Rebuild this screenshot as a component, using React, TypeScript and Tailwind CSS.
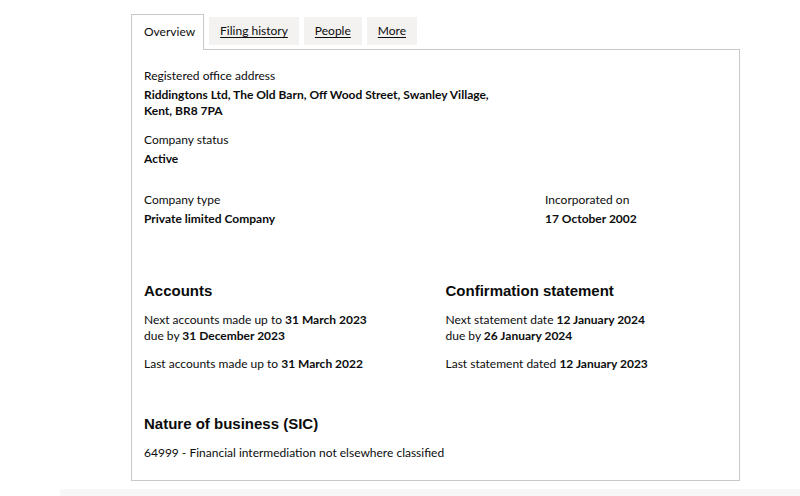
const TABS = ["Filing history", "People", "More"];

function Field({ label, value }: { label: string; value: React.ReactNode }) {
  return (
    <div>
      <p className="leading-4">{label}</p>
      <p className="mt-[3px] font-bold leading-4">{value}</p>
    </div>
  );
}

const headingFont = { fontFamily: "'Liberation Sans', Arial, sans-serif" };

export default function App() {
  return (
    <div
      className="flex min-h-[496px] w-[800px] flex-col bg-white text-[#0b0c0c] text-[12px]"
      style={{ fontFamily: "Lato, 'Open Sans', sans-serif" }}
    >
      <div className="ml-[131px] w-[609px] pt-[14px]">
        {/* Tabs */}
        <div className="flex items-end gap-[5px]">
          <div className="relative z-10 -mb-px h-[36px] border border-b-0 border-[#c8c8c8] bg-white pl-[12px] pr-[8px] pt-[8px]">
            Overview
          </div>
          {TABS.map((t) => (
            <a
              key={t}
              href="#"
              className="mb-[4px] h-[28px] bg-[#f3f2f1] px-[11px] pt-[5px] underline underline-offset-2"
            >
              {t}
            </a>
          ))}
        </div>

        {/* Panel */}
        <div className="h-[432px] border border-[#c8c8c8] px-[12px] pt-[18px]">
          <Field
            label="Registered office address"
            value={
              <>
                Riddingtons Ltd, The Old Barn, Off Wood Street, Swanley Village,
                <br />
                Kent, BR8 7PA
              </>
            }
          />
          <div className="mt-[13px]">
            <Field label="Company status" value="Active" />
          </div>
          <div className="mt-[25px] flex">
            <div className="w-[401px]">
              <Field label="Company type" value="Private limited Company" />
            </div>
            <Field label="Incorporated on" value="17 October 2002" />
          </div>

          <div className="mt-[54px] grid grid-cols-2 gap-5">
            <section>
              <h2 className="text-[15px] font-bold leading-5" style={headingFont}>
                Accounts
              </h2>
              <p className="mt-[11px] leading-4">
                Next accounts made up to <b>31 March 2023</b>
                <br />
                due by <b>31 December 2023</b>
              </p>
              <p className="mt-[12px] leading-4">
                Last accounts made up to <b>31 March 2022</b>
              </p>
            </section>
            <section>
              <h2 className="text-[15px] font-bold leading-5" style={headingFont}>
                Confirmation statement
              </h2>
              <p className="mt-[11px] leading-4">
                Next statement date <b>12 January 2024</b>
                <br />
                due by <b>26 January 2024</b>
              </p>
              <p className="mt-[12px] leading-4">
                Last statement dated <b>12 January 2023</b>
              </p>
            </section>
          </div>

          <h2 className="mt-[42px] text-[15px] font-bold leading-5" style={headingFont}>
            Nature of business (SIC)
          </h2>
          <p className="mt-[11px] leading-4">64999 - Financial intermediation not elsewhere classified</p>
        </div>
      </div>

      {/* next section starts just below the fold */}
      <div className="mt-[8px] ml-[60px] flex-1 bg-[#f7f7f7]" />
    </div>
  );
}
